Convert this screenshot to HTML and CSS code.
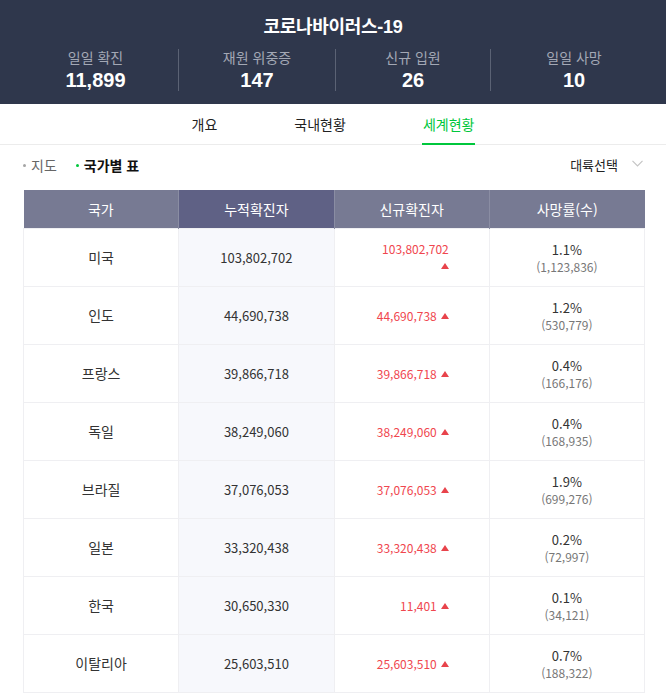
FILE: index.html
```html
<!DOCTYPE html>
<html lang="ko">
<head>
<meta charset="utf-8">
<title>코로나바이러스-19</title>
<link rel="stylesheet" href="styles.css">
</head>
<body>
<header class="hero">
  <h1 class="hero-title">코로나바이러스<span class="num">-19</span></h1>
  <div class="stats">
    <div class="stat"><span class="stat-label">일일 확진</span><strong class="stat-value">11,899</strong></div>
    <div class="stat"><span class="stat-label">재원 위중증</span><strong class="stat-value">147</strong></div>
    <div class="stat"><span class="stat-label">신규 입원</span><strong class="stat-value">26</strong></div>
    <div class="stat"><span class="stat-label">일일 사망</span><strong class="stat-value">10</strong></div>
  </div>
</header>

<nav class="tabs">
  <a class="tab">개요</a>
  <a class="tab">국내현황</a>
  <a class="tab active">세계현황</a>
</nav>

<div class="filters">
  <div class="views">
    <span class="view">지도</span>
    <span class="view active">국가별 표</span>
  </div>
  <div class="select">대륙선택
    <svg class="chev" width="11" height="7" viewBox="0 0 11 7"><path d="M0.5 0.8 L5.5 5.8 L10.5 0.8" fill="none" stroke="#c4c4c4" stroke-width="1.2"/></svg>
  </div>
</div>

<div class="table-wrap">
<table class="world">
  <thead>
    <tr><th>국가</th><th class="hl">누적확진자</th><th>신규확진자</th><th>사망률(수)</th></tr>
  </thead>
  <tbody>
    <tr><td class="country">미국</td><td class="total">103,802,702</td><td class="new"><span>103,802,702</span><i class="up"></i></td><td class="death"><span class="rate">1.1%</span><span class="cnt">(1,123,836)</span></td></tr>
    <tr><td class="country">인도</td><td class="total">44,690,738</td><td class="new"><span>44,690,738</span><i class="up"></i></td><td class="death"><span class="rate">1.2%</span><span class="cnt">(530,779)</span></td></tr>
    <tr><td class="country">프랑스</td><td class="total">39,866,718</td><td class="new"><span>39,866,718</span><i class="up"></i></td><td class="death"><span class="rate">0.4%</span><span class="cnt">(166,176)</span></td></tr>
    <tr><td class="country">독일</td><td class="total">38,249,060</td><td class="new"><span>38,249,060</span><i class="up"></i></td><td class="death"><span class="rate">0.4%</span><span class="cnt">(168,935)</span></td></tr>
    <tr><td class="country">브라질</td><td class="total">37,076,053</td><td class="new"><span>37,076,053</span><i class="up"></i></td><td class="death"><span class="rate">1.9%</span><span class="cnt">(699,276)</span></td></tr>
    <tr><td class="country">일본</td><td class="total">33,320,438</td><td class="new"><span>33,320,438</span><i class="up"></i></td><td class="death"><span class="rate">0.2%</span><span class="cnt">(72,997)</span></td></tr>
    <tr><td class="country">한국</td><td class="total">30,650,330</td><td class="new"><span>11,401</span><i class="up"></i></td><td class="death"><span class="rate">0.1%</span><span class="cnt">(34,121)</span></td></tr>
    <tr><td class="country">이탈리아</td><td class="total">25,603,510</td><td class="new"><span>25,603,510</span><i class="up"></i></td><td class="death"><span class="rate">0.7%</span><span class="cnt">(188,322)</span></td></tr>
  </tbody>
</table>
</div>
</body>
</html>
```

FILE: styles.css
```css
* { box-sizing: border-box; }
html, body { margin: 0; padding: 0; background: #fff; }
body {
  font-family: "Noto Sans CJK KR", "Noto Sans", sans-serif;
  color: #333;
  width: 666px;
  overflow: hidden;
}

.hero {
  background: #2f374c;
  height: 104px;
  padding-top: 13px;
  color: #fff;
}
.hero-title {
  margin: 0;
  text-align: center;
  font-size: 18px;
  line-height: 24px;
  font-weight: 700;
  letter-spacing: -0.3px;
}
.hero-title .num {
  font-family: "Liberation Sans", Arial, sans-serif;
}
.stats {
  display: grid;
  grid-template-columns: 165px 157px 155px 167px;
  margin: 10px 0 0 13px;
}
.stat {
  height: 42px;
  display: flex;
  flex-direction: column;
  align-items: center;
}
.stat + .stat { border-left: 1px solid #5b6274; }
.stat-label {
  font-size: 14px;
  line-height: 16px;
  color: #a3a8b5;
}
.stat-value {
  margin-top: 4px;
  font-family: "Liberation Sans", Arial, sans-serif;
  font-size: 20px;
  line-height: 22px;
  font-weight: 700;
}

.tabs {
  height: 41px;
  border-bottom: 1px solid #ececec;
  display: flex;
  justify-content: center;
  gap: 77px;
  padding-left: 0;
}
.tab {
  position: relative;
  padding-top: 10px;
  font-size: 14px;
  line-height: 20px;
  color: #222;
}
.tab.active { color: #00c73c; }
.tab.active::after {
  content: "";
  position: absolute;
  left: -1px;
  right: -1px;
  bottom: -1px;
  height: 2px;
  background: #00c73c;
}

.filters {
  height: 45px;
  padding: 10px 23px 0 23px;
  display: flex;
  justify-content: space-between;
}
.views { display: flex; gap: 19px; }
.view {
  display: flex;
  align-items: center;
  gap: 5px;
  font-size: 14px;
  line-height: 20px;
  height: 20px;
  color: #666;
}
.view::before {
  content: "";
  width: 3px;
  height: 3px;
  border-radius: 50%;
  background: #a5a5a5;
}
.view.active { color: #111; font-weight: 700; }
.view.active::before { background: #00c73c; }
.select {
  display: flex;
  align-items: center;
  gap: 14px;
  height: 20px;
  font-size: 13px;
  line-height: 20px;
  color: #222;
}
.chev { margin-top: -3px; }

.table-wrap { padding: 0 21px 0 23px; }
.world {
  width: 622px;
  border-collapse: collapse;
  table-layout: fixed;
}
.world th {
  height: 38px;
  padding: 0;
  background: #777a93;
  color: #fff;
  font-weight: 400;
  font-size: 14px;
  border-left: 1px solid #8a8da3;
}
.world th:first-child { border-left: 0; }
.world th.hl { background: #5f6185; }
.world td {
  height: 58px;
  padding: 0;
  border: 1px solid #efeff2;
  text-align: center;
  vertical-align: middle;
}
.world td.total {
  background: #f7f8fc;
  font-size: 13px;
  color: #333;
}
.world td.country { font-size: 14px; color: #333; }
.world td.new {
  text-align: right;
  padding: 0 40px 0 42px;
  color: #f0464e;
  font-size: 12px;
  line-height: 17px;
}
.up {
  display: inline-block;
  width: 0;
  height: 0;
  margin-left: 4px;
  border-left: 4px solid transparent;
  border-right: 4px solid transparent;
  border-bottom: 6px solid #e8434b;
  vertical-align: 2px;
}
.world td.death { line-height: 17px; padding-top: 1px; }
.death .rate { display: block; font-size: 13px; color: #333; }
.death .cnt { display: block; font-size: 12px; color: #777; }
```
